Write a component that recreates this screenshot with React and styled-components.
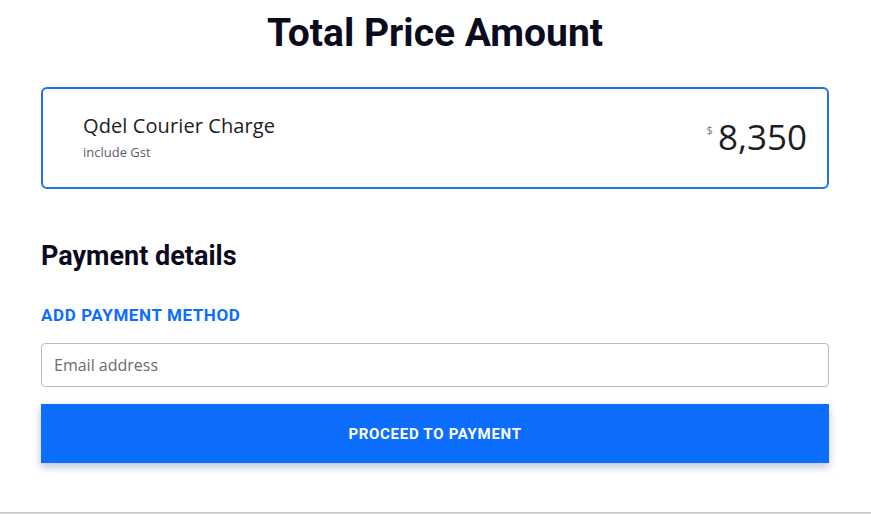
import styled, { createGlobalStyle } from 'styled-components';

const GlobalStyle = createGlobalStyle`
  * { box-sizing: border-box; }
  body {
    margin: 0;
    background: #fff;
    font-family: Roboto, "Liberation Sans", sans-serif;
  }
`;

const Page = styled.div`
  padding: 8px 42px 49px 41px;
`;

const Title = styled.h1`
  margin: 0;
  text-align: center;
  font-size: 39px;
  font-weight: 700;
  color: #0b0b1e;
  line-height: 50px;
`;

const ChargeCard = styled.div`
  margin-top: 29px;
  height: 102px;
  border: 2px solid #1a73f0;
  border-radius: 6px;
  display: flex;
  align-items: center;
  justify-content: space-between;
  padding: 0 20px 0 40px;
  font-family: "Open Sans", "Noto Sans", sans-serif;
`;

const ChargeInfo = styled.div`
  display: flex;
  flex-direction: column;
  gap: 6px;
  margin-top: -2px;
`;

const ChargeName = styled.div`
  font-size: 20px;
  color: #1c1c24;
  line-height: 24px;
  letter-spacing: 0.1px;
`;

const ChargeNote = styled.div`
  font-size: 13px;
  color: #5d5d6a;
  line-height: 16px;
`;

const Price = styled.div`
  display: flex;
  align-items: flex-start;
  color: #1c1c24;
  margin-top: -2px;
`;

const Currency = styled.span`
  font-size: 11px;
  color: #777;
  margin-right: 5px;
  margin-top: 6px;
`;

const Amount = styled.span`
  font-size: 35px;
  line-height: 42px;
`;

const SectionTitle = styled.h2`
  margin: 50px 0 0;
  font-size: 27px;
  font-weight: 700;
  color: #0b0b1e;
  line-height: 34px;
`;

const LinkButton = styled.button`
  display: block;
  margin-top: 32px;
  padding: 0;
  border: none;
  background: none;
  font-family: Roboto, sans-serif;
  font-size: 17px;
  font-weight: 700;
  letter-spacing: 0.6px;
  color: #0d6efd;
  line-height: 20px;
  cursor: pointer;
`;

const EmailInput = styled.input`
  display: block;
  width: 100%;
  height: 44px;
  margin-top: 18px;
  padding: 0 12px;
  border: 1px solid #bdbdbd;
  border-radius: 4px;
  font-family: "Open Sans", "Noto Sans", sans-serif;
  font-size: 16px;
  color: #333;
  &::placeholder { color: #6b6b72; }
`;

const PayButton = styled.button`
  display: block;
  width: 100%;
  height: 59px;
  margin-top: 17px;
  border: none;
  background: #0d6efd;
  color: #fff;
  font-family: Roboto, sans-serif;
  font-size: 15px;
  font-weight: 700;
  letter-spacing: 0.7px;
  box-shadow: 0 4px 8px rgba(40, 60, 140, 0.3);
  cursor: pointer;
`;

const Divider = styled.div`
  border-top: 1px solid #c8c8c8;
  border-bottom: 1px solid #dedede;
`;

export default function App() {
  return (
    <>
      <GlobalStyle />
      <Page>
        <Title>Total Price Amount</Title>
        <ChargeCard>
          <ChargeInfo>
            <ChargeName>Qdel Courier Charge</ChargeName>
            <ChargeNote>include Gst</ChargeNote>
          </ChargeInfo>
          <Price>
            <Currency>$</Currency>
            <Amount>8,350</Amount>
          </Price>
        </ChargeCard>
        <SectionTitle>Payment details</SectionTitle>
        <LinkButton>ADD PAYMENT METHOD</LinkButton>
        <EmailInput type="email" placeholder="Email address" />
        <PayButton>PROCEED TO PAYMENT</PayButton>
      </Page>
      <Divider />
    </>
  );
}
